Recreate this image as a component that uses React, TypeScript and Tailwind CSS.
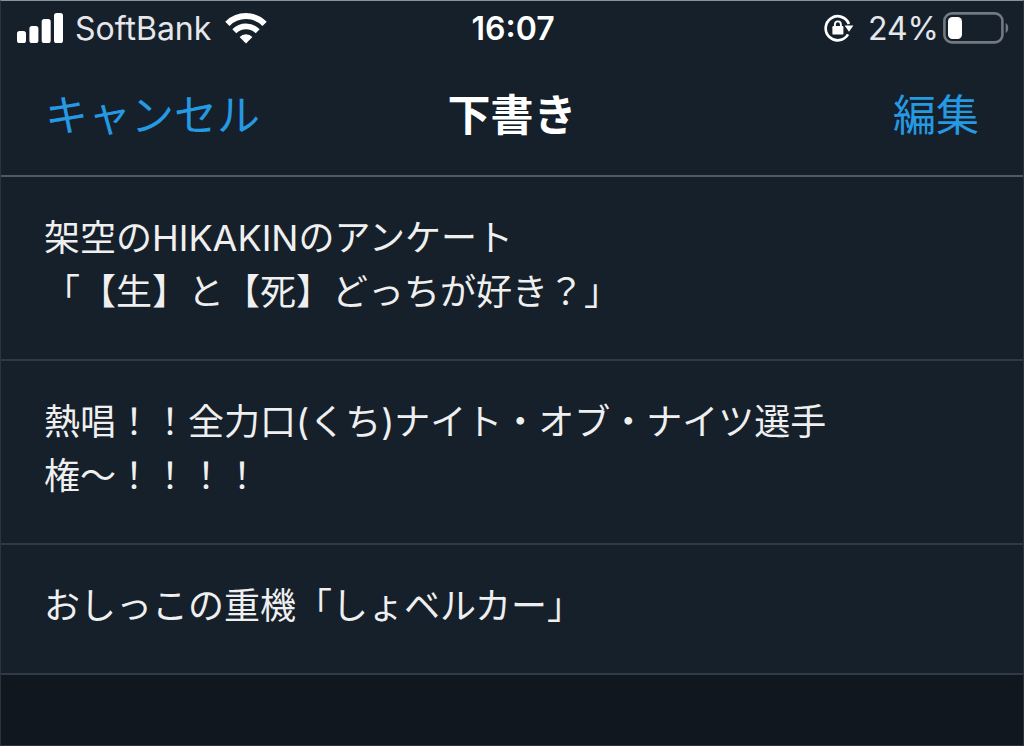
const drafts = [
  ['架空のHIKAKINのアンケート', '「【生】と【死】どっちが好き？」'],
  ['熱唱！！全力口(くち)ナイト・オブ・ナイツ選手', '権〜！！！！'],
  ['おしっこの重機「しょベルカー」'],
];

function SignalIcon() {
  return (
    <svg width="46" height="30" viewBox="0 0 46 30" fill="currentColor" aria-hidden="true">
      <rect x="0" y="18" width="9" height="12" rx="2.6" />
      <rect x="12.4" y="13" width="9" height="17" rx="2.6" />
      <rect x="24.7" y="6" width="9" height="24" rx="2.6" />
      <rect x="37" y="0" width="9" height="30" rx="2.6" />
    </svg>
  );
}

function WifiIcon() {
  return (
    <svg width="42" height="31" viewBox="0 0 42 31" fill="none" stroke="currentColor" aria-hidden="true">
      <path d="M2.4 10.8a26.3 26.3 0 0 1 37.2 0" strokeWidth="6" />
      <path d="M9.3 18.2a16.6 16.6 0 0 1 23.4 0" strokeWidth="5.6" />
      <path d="M21 30.5l-6.4-6.6a9 9 0 0 1 12.8 0z" fill="currentColor" stroke="none" />
    </svg>
  );
}

function RotationLockIcon() {
  return (
    <svg width="30" height="28" viewBox="0 0 30 28" fill="none" stroke="currentColor" aria-hidden="true">
      <path d="M24 20.4a12 12 0 1 1 .9-10.4" strokeWidth="2.7" />
      <path d="M20.6 11.6h8.8l-4.4 6.2z" fill="currentColor" stroke="none" />
      <rect x="8.4" y="12" width="11" height="8.6" rx="1.2" fill="currentColor" stroke="none" />
      <path d="M10.9 12.4v-2a3 3 0 0 1 6 0v2" strokeWidth="1.9" />
    </svg>
  );
}

function BatteryIcon() {
  return (
    <svg width="66" height="32" viewBox="0 0 66 32" fill="none" aria-hidden="true">
      <rect x="1.4" y="1.4" width="58" height="29" rx="7.5" stroke="#727982" strokeWidth="2.6" />
      <path d="M62.6 11c1.7.8 2.6 2.6 2.6 5s-.9 4.2-2.6 5z" fill="#727982" />
      <rect x="5" y="5" width="14" height="22" rx="4.5" fill="#fff" />
    </svg>
  );
}

function StatusBar() {
  return (
    <div className="grid grid-cols-[1fr_auto_1fr] items-center h-[54px] pl-4 pr-3.5 text-[32px] leading-8 text-white">
      <div className="flex items-center gap-3">
        <SignalIcon />
        <span className="pt-0.5 pr-0.5 text-gray-200">SoftBank</span>
        <WifiIcon />
      </div>
      <time className="pt-0.5 font-semibold">16:07</time>
      <div className="flex items-center justify-end gap-1">
        <RotationLockIcon />
        <span className="pt-0.5 pl-2.5 text-gray-200">24%</span>
        <BatteryIcon />
      </div>
    </div>
  );
}

export default function App() {
  return (
    <div className="min-h-screen bg-[#10171e] border border-[#2a343f] border-t-[#87949c] font-['Inter','Noto_Sans_CJK_JP',sans-serif]">
      <header className="bg-[#15202b] border-b-2 border-[#4e5a66]">
        <StatusBar />
        <nav className="grid grid-cols-[1fr_auto_1fr] items-center h-[120px] px-11 text-[43px] leading-[120px]">
          <button className="justify-self-start text-[#2699e3]">キャンセル</button>
          <h1 className="font-bold text-white">下書き</h1>
          <button className="justify-self-end text-[#2699e3]">編集</button>
        </nav>
      </header>
      <ul className="bg-[#15202b] [text-spacing-trim:space-all]">
        {drafts.map((lines) => (
          <li key={lines[0]} className="px-[43px] pt-[34px] pb-10 border-b-2 border-[#2f3a46]">
            {lines.map((line) => (
              <p key={line} className="text-4xl leading-[54px] text-[#efefef]">
                {line}
              </p>
            ))}
          </li>
        ))}
      </ul>
    </div>
  );
}
